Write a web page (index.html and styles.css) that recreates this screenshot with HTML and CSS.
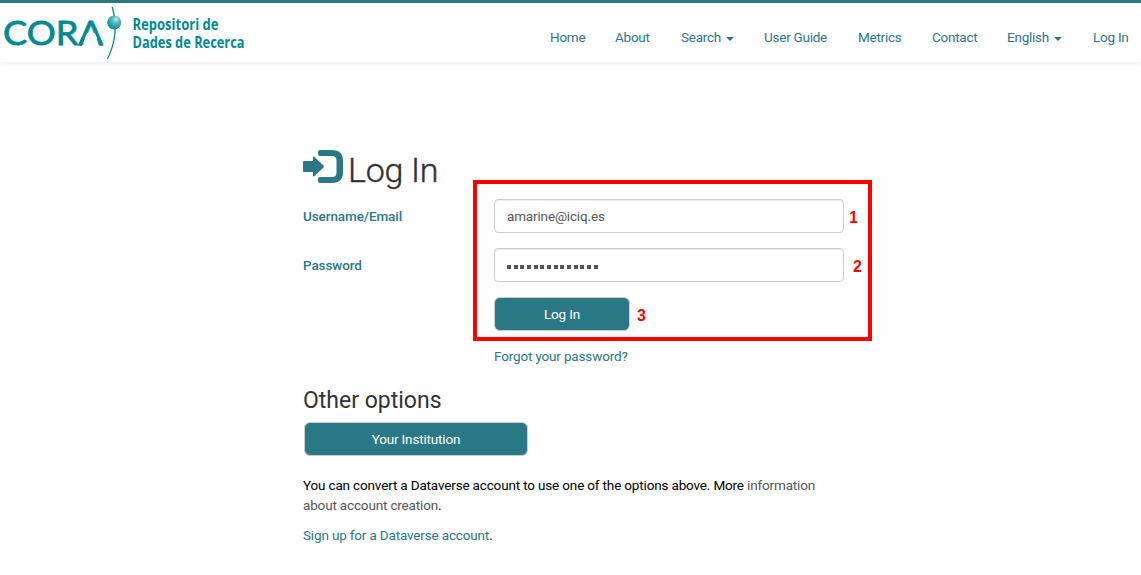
FILE: index.html
```
<!DOCTYPE html>
<html lang="en">
<head>
<meta charset="utf-8">
<title>Log In - CORA</title>
<link rel="stylesheet" href="styles.css">
</head>
<body>
<header class="navbar">
  <svg class="brand" width="250" height="59" viewBox="0 0 250 59">
    <defs><radialGradient id="ball" cx="62%" cy="28%" r="75%"><stop offset="0" stop-color="#c9e9ea"/><stop offset=".35" stop-color="#5bb9bd"/><stop offset="1" stop-color="#008b94"/></radialGradient></defs>
    <text class="brand-name" x="3" y="42" textLength="100" lengthAdjust="spacingAndGlyphs">CORA</text>
    <path d="M82.800 39.500L87.200 30H94.800L99.200 39.500Z" fill="#fff"/>
    <path d="M83.300 35.300L79.800 42.500M98.200 35.300L101.600 42.500" stroke="#008b94" stroke-width="3.600"/>
    <path d="M112.200 4Q120 31 107.400 56" fill="none" stroke="#008b94" stroke-width="1.300"/>
    <circle cx="114.200" cy="19.500" r="7" fill="url(#ball)"/>
    <text class="brand-tag" x="132.500" y="27" textLength="86" lengthAdjust="spacingAndGlyphs">Repositori de</text>
    <text class="brand-tag" x="132.500" y="45" textLength="112" lengthAdjust="spacingAndGlyphs">Dades de Recerca</text>
  </svg>
  <nav class="menu">
    <a class="w35">Home</a><a class="w36">About</a><a class="w53">Search<i class="caret"></i></a><a class="w64">User Guide</a><a class="w44">Metrics</a><a class="w46">Contact</a><a class="w56">English<i class="caret"></i></a><a class="w35">Log In</a>
  </nav>
</header>
<main class="content">
  <h1 class="title">
    <svg width="40" height="33" viewBox="0 0 40 33"><path d="M0 12Q0 11 1 11H10V7.500Q10 6 11.500 7L20.500 15.500Q21.500 16.500 20.500 17.500L11.500 26Q10 27 10 25.500V22H1Q0 22 0 21Z"/><path d="M17 0H29Q40 0 40 11V22Q40 33 29 33H17Q15 33 15 31V29Q15 27 17 27H29Q33.500 27 33.500 22.500V10.500Q33.500 6 29 6H17Q15 6 15 4V2Q15 0 17 0Z"/></svg>
    <span>Log In</span>
  </h1>
  <form class="form">
    <div class="row"><label>Username/Email</label><div class="field">amarine@iciq.es</div></div>
    <div class="row"><label>Password</label><div class="field"><span class="dots"></span></div></div>
    <div class="row"><label></label><div class="btn login">Log In</div></div>
    <a class="forgot">Forgot your password?</a>
    <div class="highlight"><b class="n1">1</b><b class="n2">2</b><b class="n3">3</b></div>
  </form>
  <h2 class="subtitle">Other options</h2>
  <div class="btn institution">Your Institution</div>
  <p class="note">You can convert a Dataverse account to use one of the options above. More <a class="muted">information</a><br><a class="muted">about account creation</a>.</p>
  <p class="signup"><a>Sign up for a Dataverse account</a>.</p>
</main>
</body>
</html>
```
FILE: styles.css
```
* { box-sizing: border-box; }
body { margin: 0; height: 575px; overflow: hidden; background: #fefefe; color: #000; font: 13.5px/20px Roboto, sans-serif; letter-spacing: -.16px; }
a { color: #2a7886; }
.navbar { height: 62px; border-top: 3px solid #2a7886; background: #fff; box-shadow: 0 1px 5px rgba(0,0,0,.08); display: flex; justify-content: space-between; }
.brand { flex: none; overflow: visible; letter-spacing: 0; }
.brand-name { font: 400 32px Lato, sans-serif; fill: #008b94; stroke: #008b94; stroke-width: .8px; }
.brand-tag { font: 700 15.5px "Open Sans", sans-serif; fill: #008b94; }
.menu { display: flex; gap: 30px; padding: 24px 13px 0 0; letter-spacing: -.25px; }
.menu a { white-space: nowrap; }
.w35 { width: 35px; }
.w36 { width: 36px; }
.w53 { width: 53px; }
.w64 { width: 64px; }
.w44 { width: 44px; }
.w46 { width: 45px; }
.w56 { width: 56px; }
.caret { display: inline-block; margin-left: 5px; vertical-align: 1px; border: 4px solid transparent; border-top-color: #2a7886; border-bottom: 0; }
.content { width: 541px; margin: 87px 0 0 303px; }
.title { display: flex; gap: 5px; margin: 0; height: 50px; padding-top: 1px; font-size: 34px; line-height: 40px; font-weight: 300; color: #333; -webkit-text-stroke: .4px #333; letter-spacing: -.3px; }
.title svg { flex: none; fill: #2a7886; }
.form { position: relative; height: 187px; }
.row { display: flex; height: 49px; }
.row label { flex: none; width: 191px; padding-top: 7px; color: #2a7886; font-weight: 500; letter-spacing: -.1px; }
.field { width: 350px; height: 34px; flex: none; padding: 6px 12px; border: 1px solid #ccc; border-radius: 4px; background: #fff; color: #555; box-shadow: inset 0 1px 1px rgba(0,0,0,.075); }
.dots { display: block; width: 92px; height: 4px; margin-top: 10px; background: repeating-linear-gradient(90deg, #555 0 4px, transparent 4px 6.680px); }
.btn { height: 34px; padding-top: 6px; border: 1px solid #ccc; border-radius: 6px; background: #2a7886; color: #fff; text-align: center; }
.login { width: 136px; }
.forgot { display: block; margin-left: 191px; }
.highlight { position: absolute; left: 170px; top: -19px; width: 399px; height: 161px; border: 4px solid red; color: red; font: 700 16px/18px "Liberation Sans", sans-serif; }
.highlight b { position: absolute; }
.n1 { left: 372px; top: 25px; }
.n2 { left: 376px; top: 74px; }
.n3 { left: 160px; top: 123px; }
.subtitle { margin: 0 0 6px; font-size: 23px; line-height: 30px; font-weight: 400; color: #333; letter-spacing: 0; }
.institution { width: 224px; margin-left: 1px; }
.note { margin: 19px 0 10px; white-space: nowrap; }
.muted { color: #555; }
.signup { margin: 0; }
```
